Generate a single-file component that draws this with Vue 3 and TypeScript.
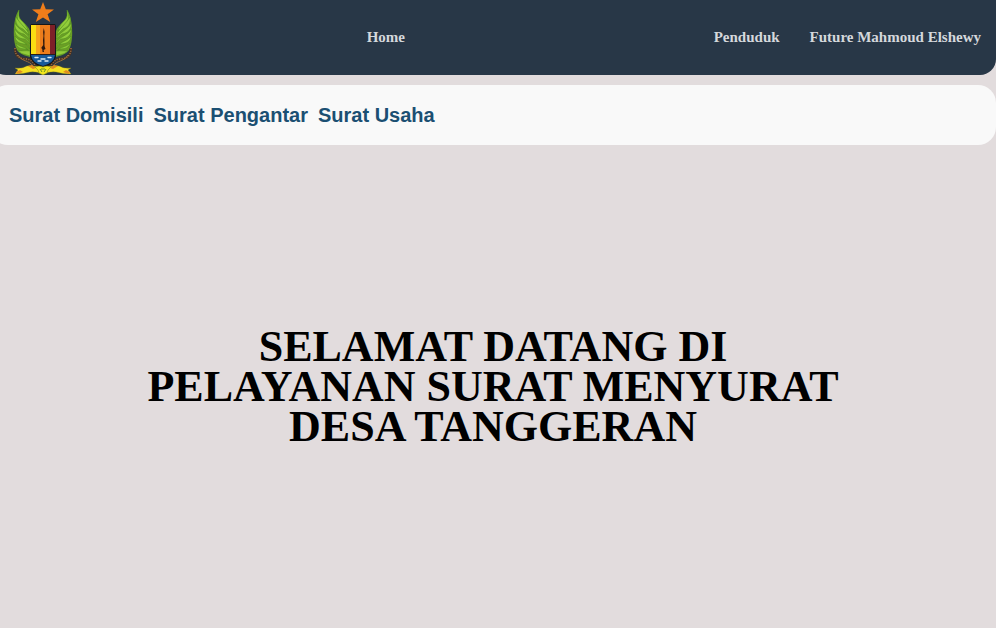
<script setup lang="ts">
interface NavLink {
  label: string
  href: string
}

const letters: NavLink[] = [
  { label: 'Surat Domisili', href: '#domisili' },
  { label: 'Surat Pengantar', href: '#pengantar' },
  { label: 'Surat Usaha', href: '#usaha' },
]

// Feathers of the left wing; the right wing mirrors them.
const feathers: string[] = [
  'M19 10C16 16 17 22 22 25L28 31C27 26 24 23 21 20C18 17 19 14 19 10Z',
  'M16 17C15 22 17 27 23 29L29 35C28 29 20 24 16 17Z',
  'M15 23C14 29 18 33 24 34L30 39C27 32 18 30 15 23Z',
  'M15 29C14 35 19 39 25 39L30 44C27 36 18 36 15 29Z',
  'M15 36C15 42 20 44 26 44L30 49C27 41 19 42 15 36Z',
  'M16 43C17 48 21 49 27 49L30 53C27 46 20 48 16 43Z',
  'M18 50C20 54 24 54 30 56L30 51C25 50 21 52 18 50Z',
]
</script>

<template>
  <div class="page">
    <header class="topbar">
      <a class="brand" href="#" aria-label="Desa Tanggeran">
        <svg class="logo" viewBox="13 0 60 75" aria-hidden="true">
          <g v-for="side in 2" :key="side" :transform="side === 2 ? 'translate(86 0) scale(-1 1)' : undefined">
            <path class="wing" d="M19 10C13 17 12 41 17 50C20 54 26 56 30 57L31 36C30 27 26 25 22 21C18 17 19 14 19 10Z" />
            <path v-for="feather in feathers" :key="feather" class="feather" :d="feather" />
            <path class="rope" d="M15 48C15 57 21 59 26 59S34 63 36 67" />
            <path class="rope-knots" d="M15 48C15 57 21 59 26 59S34 63 36 67" />
            <path class="rope thin" d="M18 55C22 62 29 60 33 66" />
            <path class="ribbon" d="M15 68Q22 69 27 66Q33 65 43 69V74Q35 71 30 72Q23 74 15 74L18 70Z" />
            <path class="ribbon-fold" d="M16 72L20 70L23 72L17 74ZM28 66L32 65L36 68L33 69Z" />
          </g>
          <path class="star" d="M43 2L45.8 9.3L54 9.5L47.6 14.2L50.2 22L43 17.4L35.8 22L38.4 14.2L32 9.5L40.2 9.3Z" />
          <path class="shield" d="M31 24H55L56 26V57Q54 64 43 68Q32 64 30 57V26Z" />
          <path fill="#f9df12" d="M31 25H36V54H31Z" />
          <path fill="#f5a51b" d="M36 25H40V54H36Z" />
          <path fill="#ed7d1c" d="M40 25H50V54H40Z" />
          <path fill="#7d2028" d="M50 25H55V54H50Z" />
          <path fill="#17599a" d="M31 55H55Q54 63 43 66Q32 63 31 55Z" />
          <path class="shield-line" d="M31 54.5H55" />
          <path class="keris" d="M43.8 28L43.1 32L43.5 36L43 40L43.2 45L41.2 48L42.2 49L42.6 52L44 52L43.6 50L45.5 49L44.5 46L44.5 41L44.3 36L44.6 32Z" />
          <path class="waves" d="M35 57.5H38M41 59H45M48 57.5H51M38 61H41M45 61H48" />
          <path class="knot" d="M35 67Q39 65 43 67Q47 65 51 67L48 70L47 73L43 75L39 73L38 70Z" />
          <path class="knot-line" d="M40 69L42 72M46 69L44 72M41 69H45" />
        </svg>
      </a>
      <nav class="main-nav" aria-label="Utama">
        <a class="home" href="#home">Home</a>
        <a href="#penduduk">Penduduk</a>
        <a href="#akun">Future Mahmoud Elshewy</a>
      </nav>
    </header>

    <nav class="letter-nav" aria-label="Surat">
      <a v-for="letter in letters" :key="letter.href" :href="letter.href">{{ letter.label }}</a>
    </nav>

    <main class="welcome">
      <h1>SELAMAT DATANG DI<br />PELAYANAN SURAT MENYURAT<br />DESA TANGGERAN</h1>
    </main>
  </div>
</template>

<style>
body {
  margin: 0;
  background: #e2dcdd;
}
</style>

<style scoped>
.page {
  display: flex;
  flex-direction: column;
  min-height: 100vh;
  overflow: hidden;
}

.topbar,
.letter-nav {
  margin-left: -10px;
  display: flex;
  align-items: center;
  box-sizing: border-box;
}

.topbar {
  height: 75px;
  padding: 0 15px 0 23px;
  background: #283747;
  border-radius: 0 0 16px 16px;
}

.brand,
.logo {
  display: block;
}

.brand {
  flex: none;
}

.logo {
  width: 60px;
  height: 75px;
}

.main-nav {
  flex: 1;
  display: flex;
  justify-content: flex-end;
  gap: 30px;
  padding: 0 0 2px 15px;
}

.main-nav a {
  color: #d5d8dc;
  font: bold 15px/20px "Liberation Serif", "Times New Roman", serif;
  text-decoration: none;
}

.main-nav .home {
  margin: 0 auto;
}

.letter-nav {
  margin-top: 10px;
  height: 60px;
  padding: 0 19px;
  gap: 10px;
  background: #f9f9f9;
  border-radius: 18px;
}

.letter-nav a {
  color: #1b4f72;
  font: bold 20px/24px "Liberation Sans", Arial, sans-serif;
  text-decoration: none;
}

.welcome {
  flex: 1;
  display: flex;
  align-items: center;
  justify-content: center;
  padding-right: 10px;
}

h1 {
  margin: 0;
  color: #000;
  font: bold 44px/40px Georgia, "Liberation Serif", serif;
  text-align: center;
}

.wing {
  fill: #6b9e25;
}

.feather {
  fill: #92cc3a;
  stroke: #4a8a20;
  stroke-width: 0.5;
}

.rope {
  fill: none;
  stroke: #49301f;
  stroke-width: 2.4;
}

.rope.thin {
  stroke: #9b6b38;
  stroke-width: 1;
}

.rope-knots {
  fill: none;
  stroke: #a8764a;
  stroke-width: 1.4;
  stroke-dasharray: 1 1.5;
}

.ribbon {
  fill: #f4df21;
  stroke: #8b8415;
  stroke-width: 0.3;
}

.ribbon-fold {
  fill: #e18c20;
}

.star {
  fill: #ef7d1a;
}

.shield {
  fill: #15171a;
}

.shield-line {
  fill: none;
  stroke: #38251c;
  stroke-width: 0.6;
}

.keris {
  fill: #30190f;
}

.waves {
  fill: none;
  stroke: #d9eaf5;
  stroke-width: 1.4;
  stroke-linecap: round;
}

.knot {
  fill: #f3e51e;
  stroke: #7c8718;
  stroke-width: 0.5;
}

.knot-line {
  fill: none;
  stroke: #3f7b28;
  stroke-width: 0.8;
}
</style>
